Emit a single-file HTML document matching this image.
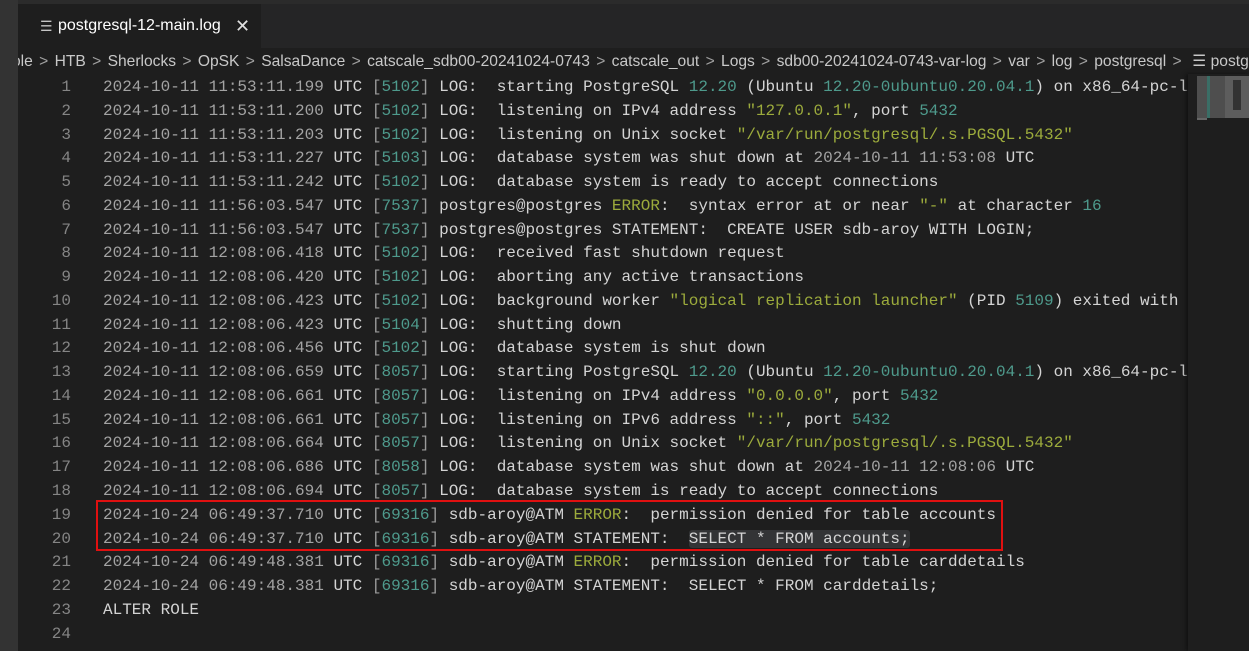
<!DOCTYPE html>
<html><head><meta charset="utf-8"><style>
*{margin:0;padding:0;box-sizing:border-box}
body{width:1249px;height:651px;background:#1e1e1e;overflow:hidden;position:relative;font-family:"Liberation Sans",sans-serif}
#act{position:absolute;left:0;top:0;width:18px;height:651px;background:#333333}
#top{position:absolute;left:18px;top:0;right:0;height:4px;background:#2b2b2b}
#tabs{position:absolute;left:18px;top:4px;right:0;height:44px;background:#252526}
#tab{position:absolute;left:0;top:0;width:243px;height:44px;background:#1e1e1e;color:#fff;font-size:16px;line-height:44px;padding-left:40px}
#tab .ic{position:absolute;left:22px;top:0;color:#c5c5c5;font-size:14px}
#tab .x{position:absolute;left:217px;top:0;font-size:18px;color:#e0e0e0}
#bc{position:absolute;left:18px;top:49px;right:0;height:26px;background:#1e1e1e;color:#c8c8c8;font-size:15.6px;line-height:26px;white-space:nowrap;overflow:hidden;text-indent:-6px}
#bc .g{color:#a0a0a0;margin:0 2px}
#ed{position:absolute;left:18px;top:76px;width:1170px;font-family:"Liberation Mono",monospace;font-size:16px}
.l{height:23.78px;line-height:23.78px;position:relative}
.ln{position:absolute;left:0;width:53px;text-align:right;color:#858585}
.c{position:absolute;left:85px;color:#d4d4d4;white-space:pre}
.t{color:#a3a3a3}.b{color:#9a9a9a}.n{color:#4e9a8c}.s{color:#9cab3c}
.hl{background:#333436;border-radius:3px}
#mm{position:absolute;left:1188px;top:74px;width:61px;height:577px;background:#1e1e1e;box-shadow:-2px 0 4px #111}
#box{position:absolute;left:96px;top:500px;width:907px;height:51px;border:2px solid #e01010}
</style></head><body>
<div id="act"></div><div id="top"></div>
<div id="tabs"><div id="tab"><span class="ic">☰</span>postgresql-12-main.log<span class="x">✕</span></div></div>
<div id="bc">ole <span class="g">&gt;</span> HTB <span class="g">&gt;</span> Sherlocks <span class="g">&gt;</span> OpSK <span class="g">&gt;</span> SalsaDance <span class="g">&gt;</span> catscale_sdb00-20241024-0743 <span class="g">&gt;</span> catscale_out <span class="g">&gt;</span> Logs <span class="g">&gt;</span> sdb00-20241024-0743-var-log <span class="g">&gt;</span> var <span class="g">&gt;</span> log <span class="g">&gt;</span> postgresql <span class="g">&gt;</span> &nbsp;☰ postgresql-12-main.log</div>
<div id="ed"><div class="l"><span class="ln">1</span><span class="c"><span class="t">2024-10-11 11:53:11.199</span> UTC <span class="b">[</span><span class="n">5102</span><span class="b">]</span> LOG:  starting PostgreSQL <span class="n">12.20</span> (Ubuntu <span class="n">12.20-0ubuntu0.20.04.1</span>) on x86_64-pc-l</span></div><div class="l"><span class="ln">2</span><span class="c"><span class="t">2024-10-11 11:53:11.200</span> UTC <span class="b">[</span><span class="n">5102</span><span class="b">]</span> LOG:  listening on IPv4 address <span class="s">"127.0.0.1"</span>, port <span class="n">5432</span></span></div><div class="l"><span class="ln">3</span><span class="c"><span class="t">2024-10-11 11:53:11.203</span> UTC <span class="b">[</span><span class="n">5102</span><span class="b">]</span> LOG:  listening on Unix socket <span class="s">"/var/run/postgresql/.s.PGSQL.5432"</span></span></div><div class="l"><span class="ln">4</span><span class="c"><span class="t">2024-10-11 11:53:11.227</span> UTC <span class="b">[</span><span class="n">5103</span><span class="b">]</span> LOG:  database system was shut down at <span class="t">2024-10-11 11:53:08</span> UTC</span></div><div class="l"><span class="ln">5</span><span class="c"><span class="t">2024-10-11 11:53:11.242</span> UTC <span class="b">[</span><span class="n">5102</span><span class="b">]</span> LOG:  database system is ready to accept connections</span></div><div class="l"><span class="ln">6</span><span class="c"><span class="t">2024-10-11 11:56:03.547</span> UTC <span class="b">[</span><span class="n">7537</span><span class="b">]</span> postgres@postgres <span class="s">ERROR</span>:  syntax error at or near <span class="s">"-"</span> at character <span class="n">16</span></span></div><div class="l"><span class="ln">7</span><span class="c"><span class="t">2024-10-11 11:56:03.547</span> UTC <span class="b">[</span><span class="n">7537</span><span class="b">]</span> postgres@postgres STATEMENT:  CREATE USER sdb-aroy WITH LOGIN;</span></div><div class="l"><span class="ln">8</span><span class="c"><span class="t">2024-10-11 12:08:06.418</span> UTC <span class="b">[</span><span class="n">5102</span><span class="b">]</span> LOG:  received fast shutdown request</span></div><div class="l"><span class="ln">9</span><span class="c"><span class="t">2024-10-11 12:08:06.420</span> UTC <span class="b">[</span><span class="n">5102</span><span class="b">]</span> LOG:  aborting any active transactions</span></div><div class="l"><span class="ln">10</span><span class="c"><span class="t">2024-10-11 12:08:06.423</span> UTC <span class="b">[</span><span class="n">5102</span><span class="b">]</span> LOG:  background worker <span class="s">"logical replication launcher"</span> (PID <span class="n">5109</span>) exited with</span></div><div class="l"><span class="ln">11</span><span class="c"><span class="t">2024-10-11 12:08:06.423</span> UTC <span class="b">[</span><span class="n">5104</span><span class="b">]</span> LOG:  shutting down</span></div><div class="l"><span class="ln">12</span><span class="c"><span class="t">2024-10-11 12:08:06.456</span> UTC <span class="b">[</span><span class="n">5102</span><span class="b">]</span> LOG:  database system is shut down</span></div><div class="l"><span class="ln">13</span><span class="c"><span class="t">2024-10-11 12:08:06.659</span> UTC <span class="b">[</span><span class="n">8057</span><span class="b">]</span> LOG:  starting PostgreSQL <span class="n">12.20</span> (Ubuntu <span class="n">12.20-0ubuntu0.20.04.1</span>) on x86_64-pc-l</span></div><div class="l"><span class="ln">14</span><span class="c"><span class="t">2024-10-11 12:08:06.661</span> UTC <span class="b">[</span><span class="n">8057</span><span class="b">]</span> LOG:  listening on IPv4 address <span class="s">"0.0.0.0"</span>, port <span class="n">5432</span></span></div><div class="l"><span class="ln">15</span><span class="c"><span class="t">2024-10-11 12:08:06.661</span> UTC <span class="b">[</span><span class="n">8057</span><span class="b">]</span> LOG:  listening on IPv6 address <span class="s">"::"</span>, port <span class="n">5432</span></span></div><div class="l"><span class="ln">16</span><span class="c"><span class="t">2024-10-11 12:08:06.664</span> UTC <span class="b">[</span><span class="n">8057</span><span class="b">]</span> LOG:  listening on Unix socket <span class="s">"/var/run/postgresql/.s.PGSQL.5432"</span></span></div><div class="l"><span class="ln">17</span><span class="c"><span class="t">2024-10-11 12:08:06.686</span> UTC <span class="b">[</span><span class="n">8058</span><span class="b">]</span> LOG:  database system was shut down at <span class="t">2024-10-11 12:08:06</span> UTC</span></div><div class="l"><span class="ln">18</span><span class="c"><span class="t">2024-10-11 12:08:06.694</span> UTC <span class="b">[</span><span class="n">8057</span><span class="b">]</span> LOG:  database system is ready to accept connections</span></div><div class="l"><span class="ln">19</span><span class="c"><span class="t">2024-10-24 06:49:37.710</span> UTC <span class="b">[</span><span class="n">69316</span><span class="b">]</span> sdb-aroy@ATM <span class="s">ERROR</span>:  permission denied for table accounts</span></div><div class="l"><span class="ln">20</span><span class="c"><span class="t">2024-10-24 06:49:37.710</span> UTC <span class="b">[</span><span class="n">69316</span><span class="b">]</span> sdb-aroy@ATM STATEMENT:  <span class="hl">SELECT * FROM accounts;</span></span></div><div class="l"><span class="ln">21</span><span class="c"><span class="t">2024-10-24 06:49:48.381</span> UTC <span class="b">[</span><span class="n">69316</span><span class="b">]</span> sdb-aroy@ATM <span class="s">ERROR</span>:  permission denied for table carddetails</span></div><div class="l"><span class="ln">22</span><span class="c"><span class="t">2024-10-24 06:49:48.381</span> UTC <span class="b">[</span><span class="n">69316</span><span class="b">]</span> sdb-aroy@ATM STATEMENT:  SELECT * FROM carddetails;</span></div><div class="l"><span class="ln">23</span><span class="c">ALTER ROLE</span></div><div class="l"><span class="ln">24</span><span class="c"></span></div></div>
<div id="mm"><svg width="61" height="50" style="position:absolute;left:9px;top:2px"><rect x="0" y="0" width="28" height="42" fill="#5a5a5a" opacity=".8"/><rect x="0" y="42" width="10" height="2" fill="#666"/><rect x="10" y="0" width="3" height="42" fill="#3a6e66"/><rect x="28" y="0" width="24" height="42" fill="#777" opacity=".7"/><rect x="36" y="4" width="8" height="30" fill="#333"/></svg></div>
<div id="box"></div>
</body></html>
